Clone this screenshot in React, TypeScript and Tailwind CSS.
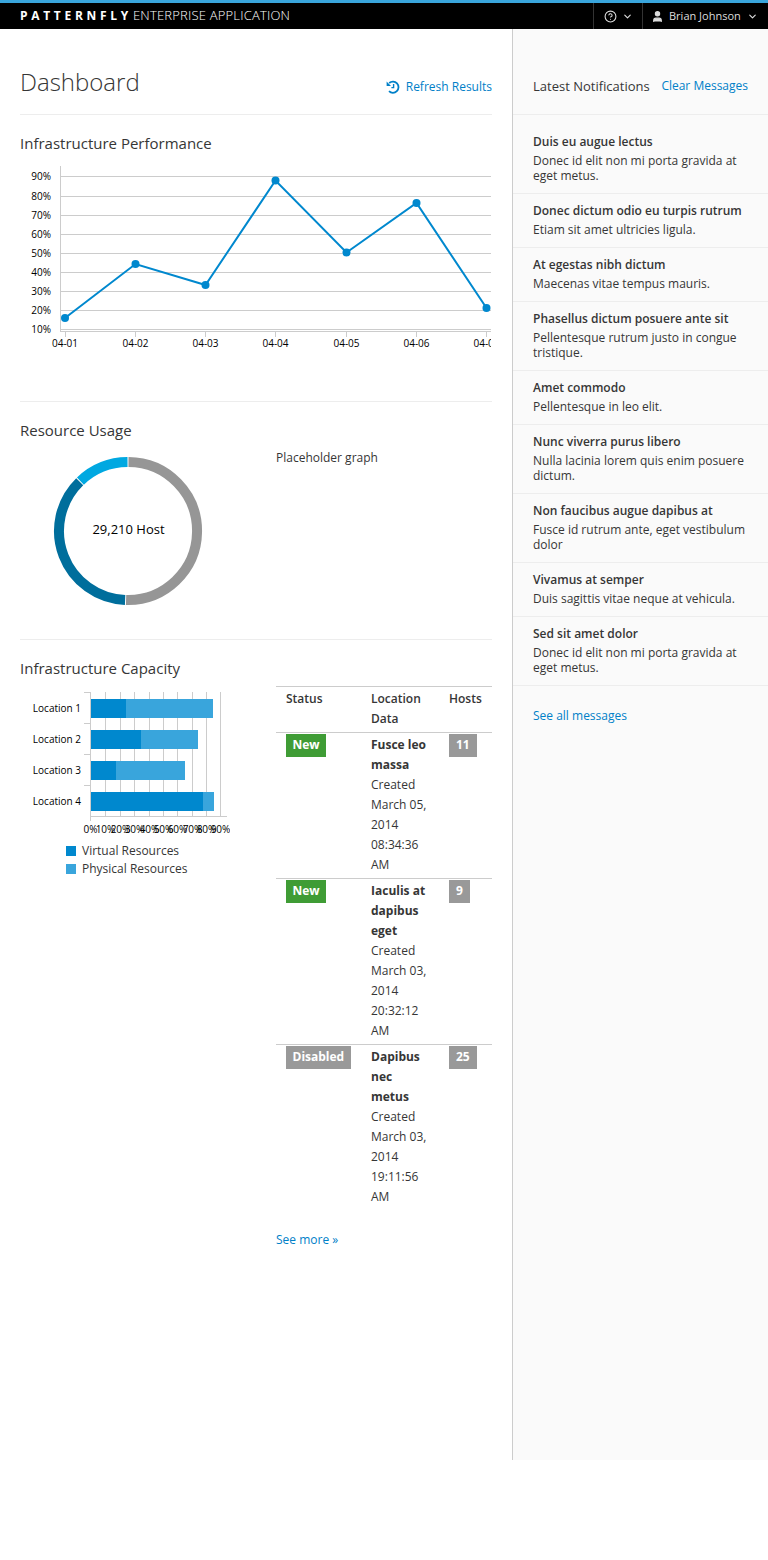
import { ChevronDown, User, CircleHelp } from "lucide-react";

const linePoints = [
  [65, 318],
  [135.5, 264],
  [205.5, 285],
  [275.5, 180.5],
  [346.5, 252.5],
  [416.5, 203],
  [486.5, 308],
];
const lineLabels = ["04-01", "04-02", "04-03", "04-04", "04-05", "04-06", "04-07"];
const percentRows = [
  ["90%", 176],
  ["80%", 196],
  ["70%", 215],
  ["60%", 234],
  ["50%", 253],
  ["40%", 272],
  ["30%", 291],
  ["20%", 310],
  ["10%", 329],
] as const;

const barRows = [
  { label: "Location 1", y: 699, split: 126, end: 213 },
  { label: "Location 2", y: 730, split: 141, end: 198 },
  { label: "Location 3", y: 761, split: 116, end: 185 },
  { label: "Location 4", y: 792, split: 203, end: 214 },
];
const barGrid = [105.5, 120.5, 134.5, 149.5, 163.5, 177.5, 192.5, 206.5, 220.5];

const notifications = [
  { title: "Duis eu augue lectus", body: "Donec id elit non mi porta gravida at eget metus." },
  { title: "Donec dictum odio eu turpis rutrum", body: "Etiam sit amet ultricies ligula." },
  { title: "At egestas nibh dictum", body: "Maecenas vitae tempus mauris." },
  { title: "Phasellus dictum posuere ante sit", body: "Pellentesque rutrum justo in congue tristique." },
  { title: "Amet commodo", body: "Pellentesque in leo elit." },
  { title: "Nunc viverra purus libero", body: "Nulla lacinia lorem quis enim posuere dictum." },
  { title: "Non faucibus augue dapibus at", body: "Fusce id rutrum ante, eget vestibulum dolor" },
  { title: "Vivamus at semper", body: "Duis sagittis vitae neque at vehicula." },
  { title: "Sed sit amet dolor", body: "Donec id elit non mi porta gravida at eget metus." },
];

const tableRows = [
  { status: "New", green: true, name: "Fusce leo massa", created: "Created March 05, 2014 08:34:36 AM", hosts: 11 },
  { status: "New", green: true, name: "Iaculis at dapibus eget", created: "Created March 03, 2014 20:32:12 AM", hosts: 9 },
  { status: "Disabled", green: false, name: "Dapibus nec metus", created: "Created March 03, 2014 19:11:56 AM", hosts: 25 },
];

function RefreshIcon() {
  return (
    <svg width="14" height="14" viewBox="0 0 14 14" className="mr-[6px] shrink-0">
      <path d="M3.2 3 A5.6 5.6 0 1 1 3 11.2" fill="none" stroke="#0080c8" strokeWidth="1.8" />
      <path d="M0.6 1.6 L0.6 6 L5 6 Z" fill="#0080c8" />
      <path d="M7.6 4 V7.6 H5.4" fill="none" stroke="#0080c8" strokeWidth="1.4" />
    </svg>
  );
}

function LineChart() {
  return (
    <svg width="471" height="200" viewBox="20 160 471 200" className="block">
      {percentRows.map(([label, y]) => (
        <g key={label}>
          <line x1="60" x2="491" y1={y + 0.5} y2={y + 0.5} stroke="#cccccc" />
          <text x="51" y={y + 3.5} textAnchor="end" fontSize="10" fill="#000">
            {label}
          </text>
        </g>
      ))}
      <line x1="60.5" x2="60.5" y1="166" y2="332" stroke="#cccccc" />
      <line x1="60" x2="491" y1="331.5" y2="331.5" stroke="#cccccc" />
      {linePoints.map(([x], i) => (
        <g key={i}>
          <line x1={Math.floor(x) + 0.5} x2={Math.floor(x) + 0.5} y1="332" y2="337" stroke="#cccccc" />
          <text x={x} y="347" textAnchor="middle" fontSize="10" fill="#000">
            {lineLabels[i]}
          </text>
        </g>
      ))}
      <polyline
        points={linePoints.map((p) => p.join(",")).join(" ")}
        fill="none"
        stroke="#0088ce"
        strokeWidth="2"
      />
      {linePoints.map(([x, y], i) => (
        <circle key={i} cx={x} cy={y} r="4" fill="#0088ce" />
      ))}
    </svg>
  );
}

function arc(start: number, end: number) {
  const r = 69;
  const pt = (deg: number) => {
    const a = ((deg - 90) * Math.PI) / 180;
    return `${(75 + r * Math.cos(a)).toFixed(2)} ${(75 + r * Math.sin(a)).toFixed(2)}`;
  };
  const large = end - start > 180 ? 1 : 0;
  return `M ${pt(start)} A ${r} ${r} 0 ${large} 1 ${pt(end)}`;
}

function Donut() {
  return (
    <div className="relative w-[150px] h-[150px]">
      <svg width="150" height="150" viewBox="0 0 150 150" className="block">
        <path d={arc(0.4, 181.6)} fill="none" stroke="#969696" strokeWidth="10" />
        <path d={arc(182.4, 315.6)} fill="none" stroke="#006e9c" strokeWidth="10" />
        <path d={arc(316.4, 359.6)} fill="none" stroke="#00a8e1" strokeWidth="10" />
      </svg>
      <div className="absolute inset-0 flex items-center justify-center text-[13px] text-black pb-[2px] pl-[1px]">
        29,210 Host
      </div>
    </div>
  );
}

function BarChart() {
  return (
    <svg width="210" height="150" viewBox="20 688 210 150" className="block">
      {barGrid.map((x) => (
        <line key={x} x1={x} x2={x} y1="692" y2="816" stroke="#cccccc" />
      ))}
      <line x1="90.5" x2="90.5" y1="692" y2="821" stroke="#cccccc" />
      <line x1="90.5" x2="227" y1="816.5" y2="816.5" stroke="#cccccc" />
      {[692, 723, 754, 785].map((y) => (
        <line key={y} x1="84" x2="90" y1={y + 0.5} y2={y + 0.5} stroke="#cccccc" />
      ))}
      {barRows.map((row) => (
        <g key={row.label}>
          <text x="81" y={row.y + 13} textAnchor="end" fontSize="10" fill="#000">
            {row.label}
          </text>
          <rect x="91" y={row.y} width={row.end - 91} height="19" fill="#39a5dc" />
          <rect x="91" y={row.y} width={row.split - 91} height="19" fill="#0088ce" />
        </g>
      ))}
      {["0%", "10%", "20%", "30%", "40%", "50%", "60%", "70%", "80%", "90%"].map((label, i) => (
        <text
          key={label}
          x={i === 0 ? 90.5 : barGrid[i - 1]}
          y="833"
          textAnchor="middle"
          fontSize="10"
          fill="#000"
        >
          {label}
        </text>
      ))}
    </svg>
  );
}

export default function App() {
  return (
    <div className="font-['Open_Sans',sans-serif] text-xs text-[#363636] bg-white min-h-[1560px]">
      {/* Top bar */}
      <div className="h-[29px] bg-black border-t-[3px] border-[#39a5dc] flex items-center justify-between text-white">
        <div className="pl-5 flex items-center whitespace-nowrap">
          <span className="font-bold text-[12px] tracking-[3.7px]">PATTERNFLY</span>
          <span className="ml-[1px] text-[13px] font-light tracking-[0.2px] text-white">ENTERPRISE APPLICATION</span>
        </div>
        <div className="flex h-full text-[#dddddd] text-[11px]">
          <div className="w-[49px] border-l border-[#333333] flex items-center pl-[10px]">
            <CircleHelp size={13} strokeWidth={2} />
            <ChevronDown size={11} strokeWidth={2.5} className="ml-[5px]" />
          </div>
          <div className="w-[126px] border-l border-[#333333] flex items-center pl-[8px]">
            <User size={13} fill="#dddddd" />
            <span className="ml-[5px] whitespace-nowrap">Brian Johnson</span>
            <ChevronDown size={11} strokeWidth={2.5} className="ml-[6px]" />
          </div>
        </div>
      </div>

      <div className="flex h-[1431px]">
        {/* Main column */}
        <div className="w-[512px] px-5">
          <div className="h-[86px] border-b border-[#ededed] flex justify-between items-end pb-[16px]">
            <h1 className="text-[24px] leading-[32px] font-light text-[#363636]">Dashboard</h1>
            <a className="flex items-center text-[#0080c8] text-xs mb-[3px]">
              <RefreshIcon />
              Refresh Results
            </a>
          </div>

          <section className="h-[287px] border-b border-[#ededed] pt-[18px]">
            <h2 className="text-[15px] leading-[20px] mb-[7px]">Infrastructure Performance</h2>
            <LineChart />
          </section>

          <section className="h-[238px] border-b border-[#ededed] pt-[18px]">
            <h2 className="text-[15px] leading-[20px] mb-[7px]">Resource Usage</h2>
            <div className="flex">
              <div className="w-[256px] pl-[33px] pt-[9px]">
                <Donut />
              </div>
              <p className="leading-[20px] mt-[1px]">Placeholder graph</p>
            </div>
          </section>

          <section className="pt-[18px]">
            <h2 className="text-[15px] leading-[20px] mb-[8px]">Infrastructure Capacity</h2>
            <div className="flex">
              <div className="w-[256px] shrink-0 pt-[2px]">
                <BarChart />
                <div className="pl-[46px] mt-[4px] leading-[18px]">
                  <div className="flex items-center">
                    <span className="w-[10px] h-[10px] bg-[#0088ce] mr-[6px]" />
                    Virtual Resources
                  </div>
                  <div className="flex items-center">
                    <span className="w-[10px] h-[10px] bg-[#39a5dc] mr-[6px]" />
                    Physical Resources
                  </div>
                </div>
              </div>
              <div className="w-[216px]">
                <table className="w-full table-fixed border-t border-[#cccccc] leading-[20px]">
                  <thead>
                    <tr className="border-b border-[#cccccc] align-top text-left">
                      <th className="w-[85px] font-semibold pl-[10px] pt-[2px] pb-[3px]">Status</th>
                      <th className="w-[78px] font-semibold pl-[10px] pr-[10px] pt-[2px] pb-[3px]">Location Data</th>
                      <th className="font-semibold pl-[10px] pt-[2px] pb-[3px]">Hosts</th>
                    </tr>
                  </thead>
                  <tbody>
                    {tableRows.map((row) => (
                      <tr key={row.name} className="border-b border-[#cccccc] last:border-b-0 align-top">
                        <td className="pl-[10px] pt-[1px] pb-[3px]">
                          <span
                            className={`inline-block h-[23px] leading-[22px] px-[6.5px] font-bold text-white ${
                              row.green ? "bg-[#3f9c35]" : "bg-[#999999]"
                            }`}
                          >
                            {row.status}
                          </span>
                        </td>
                        <td className="pl-[10px] pr-[10px] pt-[2px] pb-[3px]">
                          <div className="font-bold">{row.name}</div>
                          <div>{row.created}</div>
                        </td>
                        <td className="pl-[10px] pt-[1px] pb-[3px]">
                          <span className="inline-block h-[23px] leading-[22px] px-[7px] font-bold text-white bg-[#999999]">
                            {row.hosts}
                          </span>
                        </td>
                      </tr>
                    ))}
                  </tbody>
                </table>
                <a className="block mt-[20px] text-[#0080c8] leading-[20px]">See more »</a>
              </div>
            </div>
          </section>
        </div>

        {/* Notifications */}
        <aside className="w-[256px] border-l border-[#cccccc] bg-[#fafafa]">
          <div className="h-[86px] border-b border-[#ededed] flex justify-between items-end pl-5 pr-5 pb-[18px]">
            <span className="text-[13px] leading-[20px]">Latest Notifications</span>
            <a className="text-[#0080c8] leading-[20px]">Clear Messages</a>
          </div>
          <div className="pt-[10px]">
            {notifications.map((item) => (
              <div key={item.title} className="border-b border-[#ededed] pl-5 pr-[16px] pt-[7px] pb-[10px]">
                <div className="font-semibold leading-[20px]">{item.title}</div>
                <div className="mt-[1px] leading-[15px]">{item.body}</div>
              </div>
            ))}
          </div>
          <a className="block pl-5 mt-[20px] text-[#0080c8] leading-[20px]">See all messages</a>
        </aside>
      </div>
    </div>
  );
}
